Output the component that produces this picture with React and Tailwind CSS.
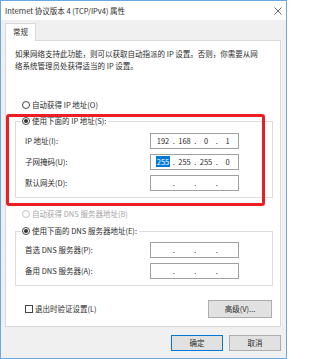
import React from "react";

function Radio({ checked, disabled }) {
  return (
    <span
      className={`flex items-center justify-center w-[8px] h-[8px] shrink-0 rounded-full border bg-white ${
        disabled ? "border-[#c4c4c4]" : "border-[#444444]"
      }`}
    >
      {checked && <span className="w-[4px] h-[4px] rounded-full bg-[#333333]" />}
    </span>
  );
}

function IpBox({ parts = ["", "", "", ""], selectFirst }) {
  return (
    <div className="flex items-center w-[89px] h-[16px] border border-[#a0a0a0] bg-white pl-[3.5px] leading-[10px]">
      {parts.map((p, i) => (
        <React.Fragment key={i}>
          <span className="w-[17px] text-center">
            {selectFirst && i === 0 ? (
              <span className="bg-[#0078d7] text-white px-[0.5px]">{p}</span>
            ) : (
              p
            )}
          </span>
          {i < 3 && <span className="w-[4.5px] text-center">.</span>}
        </React.Fragment>
      ))}
    </div>
  );
}

function Field({ label, parts, selectFirst }) {
  return (
    <div className="flex items-center h-[16px]">
      <span className="w-[134px] pl-[9px] whitespace-nowrap">{label}</span>
      <IpBox parts={parts} selectFirst={selectFirst} />
    </div>
  );
}

export default function App() {
  return (
    <div className="relative w-[287px] h-[359px] flex flex-col bg-[#f0f0f0] border border-[#6aa8e4] text-[7.5px] text-[#2b2b2b] font-['Noto_Sans_CJK_SC','Microsoft_YaHei',sans-serif] overflow-hidden">
      {/* Title bar */}
      <div className="flex items-center justify-between h-[19px] bg-white pl-[4px] pr-[4px]">
        <span className="whitespace-nowrap">Internet 协议版本 4 (TCP/IPv4) 属性</span>
        <svg width="8" height="8" viewBox="0 0 8 8" className="text-[#444]">
          <path d="M0.5 0.5 L7.5 7.5 M7.5 0.5 L0.5 7.5" stroke="currentColor" strokeWidth="0.8" />
        </svg>
      </div>

      {/* Tab */}
      <div className="pt-[3px] pl-[4px]">
        <div className="relative z-10 flex items-center justify-center w-[31px] h-[18px] -mb-px bg-white border border-b-0 border-[#d9d9d9] pb-[1px]">
          常规
        </div>
      </div>

      {/* Panel */}
      <div className="w-[276px] ml-[4px] bg-white border border-[#d9d9d9] pt-[7px] pb-[8px]">
        <p className="pl-[9px] leading-[12px] whitespace-nowrap">
          如果网络支持此功能，则可以获取自动指派的 IP 设置。否则，你需要从网
          <br />
          络系统管理员处获得适当的 IP 设置。
        </p>

        <div className="flex items-center gap-[2px] h-[12px] mt-[27px] pl-[16px]">
          <Radio />
          <span>自动获得 IP 地址(O)</span>
        </div>

        <fieldset className="w-[258px] ml-[9px] mt-[4px] border border-[#dcdcdc] pt-[6px] pb-[6px] flex flex-col gap-[5px]">
          <legend className="ml-[5px] pl-[1px] pr-[2px] h-[12px] leading-[12px]">
            <span className="flex items-center gap-[2px] h-[12px]">
              <Radio checked />
              <span>使用下面的 IP 地址(S):</span>
            </span>
          </legend>
          <Field label="IP 地址(I):" parts={["192", "168", "0", "1"]} />
          <Field label="子网掩码(U):" parts={["255", "255", "255", "0"]} selectFirst />
          <Field label="默认网关(D):" />
        </fieldset>

        <div className="flex items-center gap-[2px] h-[12px] mt-[10px] pl-[16px] text-[#a6a6a6]">
          <Radio disabled />
          <span>自动获得 DNS 服务器地址(B)</span>
        </div>

        <fieldset className="w-[258px] ml-[9px] mt-[5px] border border-[#dcdcdc] pt-[5px] pb-[6px] flex flex-col gap-[5px]">
          <legend className="ml-[5px] pl-[1px] pr-[2px] h-[12px] leading-[12px]">
            <span className="flex items-center gap-[2px] h-[12px]">
              <Radio checked />
              <span>使用下面的 DNS 服务器地址(E):</span>
            </span>
          </legend>
          <Field label="首选 DNS 服务器(P):" />
          <Field label="备用 DNS 服务器(A):" />
        </fieldset>

        <div className="flex items-center justify-between w-[258px] ml-[9px] mt-[14px] pl-[10px] pr-[1px] h-[18px]">
          <span className="flex items-center gap-[2px]">
            <span className="w-[8px] h-[8px] border border-[#444444] bg-white" />
            <span>退出时验证设置(L)</span>
          </span>
          <button className="flex items-center justify-center w-[64px] h-[18px] bg-[#e1e1e1] border border-[#adadad]">
            高级(V)...
          </button>
        </div>
      </div>

      {/* Dialog buttons */}
      <div className="flex justify-end gap-[6px] mt-[8px] pr-[5px]">
        <button className="flex items-center justify-center w-[52px] h-[16px] bg-[#e1e1e1] border border-[#0078d7]">
          确定
        </button>
        <button className="flex items-center justify-center w-[52px] h-[16px] bg-[#e1e1e1] border border-[#adadad]">
          取消
        </button>
      </div>

      {/* Red annotation box */}
      <div className="absolute left-[5px] top-[113px] w-[259px] h-[92px] border-[3px] border-[#ee1d23] rounded-[3px] pointer-events-none" />
    </div>
  );
}
